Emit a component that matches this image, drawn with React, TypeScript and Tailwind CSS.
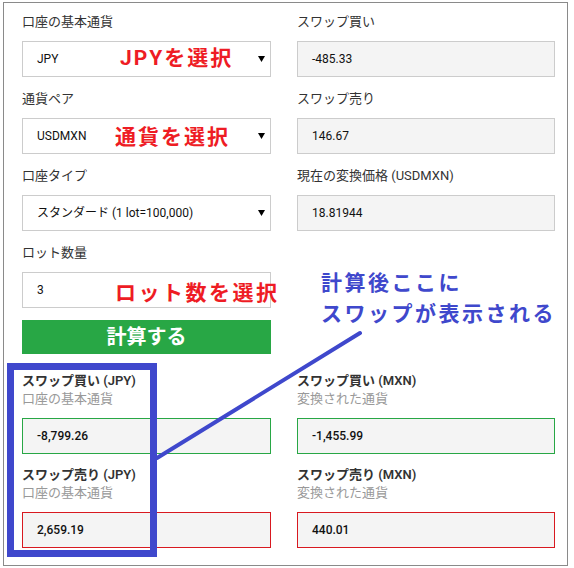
import React from 'react'

const font = { fontFamily: '"Roboto", "Noto Sans CJK JP", sans-serif' }

const Label = ({ text, strong }: { text: string; strong?: boolean }) => (
  <div className={`h-[18px] text-[13px] leading-[18px] text-[#333] ${strong ? 'font-semibold' : ''}`}>{text}</div>
)

const SelectBox = ({ value }: { value: string }) => (
  <div className="mt-[10px] flex h-[36px] items-center justify-between border border-[#cccccc] bg-white pl-[14px] pr-[5px] text-[12px] text-[#111]">
    <span>{value}</span>
    <svg width="7" height="6" viewBox="0 0 7 6">
      <path d="M0 0 H7 L3.5 6 Z" fill="#000" />
    </svg>
  </div>
)

const ReadBox = ({ value, tone }: { value: string; tone?: 'buy' | 'sell' }) => {
  const border = tone === 'buy' ? 'border-[#28a745]' : tone === 'sell' ? 'border-[#d81920]' : 'border-[#cccccc]'
  return (
    <div className={`mt-[10px] flex h-[36px] items-center border bg-[#f4f4f4] pl-[14px] text-[12px] text-[#111] ${tone ? 'font-medium' : ''} ${border}`}>
      {value}
    </div>
  )
}

const Result = ({ title, sub, value, tone }: { title: string; sub: string; value: string; tone: 'buy' | 'sell' }) => (
  <div>
    <Label text={title} strong />
    <div className="h-[18px] text-[13px] leading-[18px] text-[#999]">{sub}</div>
    <ReadBox value={value} tone={tone} />
  </div>
)

export default function App() {
  return (
    <div className="relative h-[568px] w-[574px] overflow-hidden bg-white" style={font}>
      <div className="ml-[3px] mt-[2px] h-[564px] w-[565px] border border-[#8a8a8a] pl-[18px] pt-[10px]">
        <div className="grid grid-cols-[249px_258px] gap-x-[26px] gap-y-[13px]">
          <div>
            <Label text="口座の基本通貨" />
            <SelectBox value="JPY" />
          </div>
          <div>
            <Label text="スワップ買い" />
            <ReadBox value="-485.33" />
          </div>
          <div>
            <Label text="通貨ペア" />
            <SelectBox value="USDMXN" />
          </div>
          <div>
            <Label text="スワップ売り" />
            <ReadBox value="146.67" />
          </div>
          <div>
            <Label text="口座タイプ" />
            <SelectBox value="スタンダード (1 lot=100,000)" />
          </div>
          <div>
            <Label text="現在の変換価格 (USDMXN)" />
            <ReadBox value="18.81944" />
          </div>
          <div>
            <Label text="ロット数量" />
            <div className="mt-[10px] flex h-[36px] items-center border border-[#cccccc] bg-white pl-[14px] text-[12px] text-[#111]">3</div>
          </div>
          <div />
        </div>
        <button className="mt-[12px] flex h-[34px] w-[249px] items-center justify-center bg-[#28a745] text-[20px] font-bold text-white">
          計算する
        </button>
        <div className="mt-[18px] grid grid-cols-[249px_258px] gap-x-[26px] gap-y-[12px]">
          <Result title="スワップ買い (JPY)" sub="口座の基本通貨" value="-8,799.26" tone="buy" />
          <Result title="スワップ買い (MXN)" sub="変換された通貨" value="-1,455.99" tone="buy" />
          <Result title="スワップ売り (JPY)" sub="口座の基本通貨" value="2,659.19" tone="sell" />
          <Result title="スワップ売り (MXN)" sub="変換された通貨" value="440.01" tone="sell" />
        </div>
      </div>

      {/* annotations drawn over the form */}
      <div className="pointer-events-none absolute left-[120px] top-[45px] text-[21px] font-bold leading-[26px] tracking-[2px] text-[#ee1c24]">JPYを選択</div>
      <div className="pointer-events-none absolute left-[115px] top-[124px] text-[21px] font-bold leading-[26px] tracking-[2px] text-[#ee1c24]">通貨を選択</div>
      <div className="pointer-events-none absolute left-[115px] top-[280px] text-[21px] font-bold leading-[26px] tracking-[2.5px] text-[#ee1c24]">ロット数を選択</div>
      <div className="pointer-events-none absolute left-[321px] top-[268px] text-[21px] font-bold leading-[31px] tracking-[2.5px] text-[#3f48cc]">
        <div>計算後ここに</div>
        <div>スワップが表示される</div>
      </div>
      <div className="pointer-events-none absolute left-[7px] top-[363px] h-[194px] w-[150px] border-[7px] border-[#3f48cc]" />
      <svg className="pointer-events-none absolute left-0 top-0" width="574" height="568">
        <line x1="157" y1="458" x2="360" y2="333" stroke="#3f48cc" strokeWidth="4" strokeLinecap="round" />
      </svg>
    </div>
  )
}
